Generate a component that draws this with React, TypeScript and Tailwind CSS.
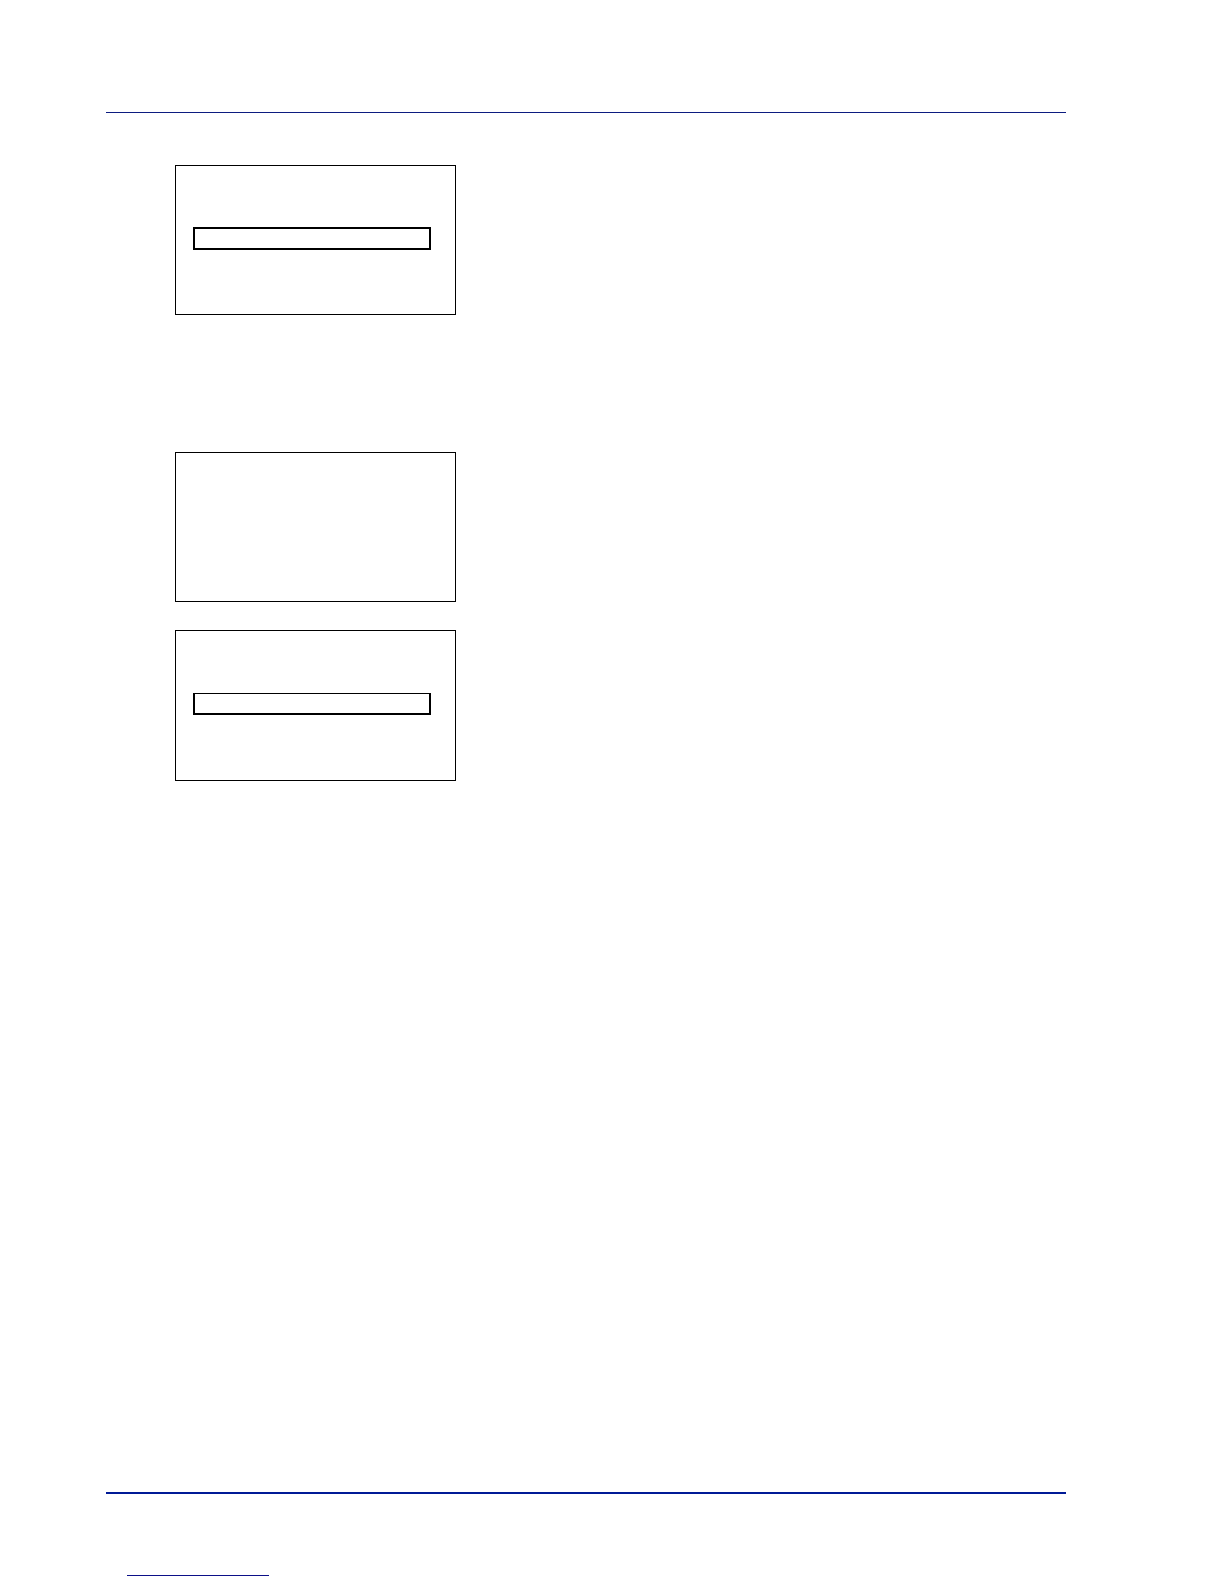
type Screen = {
  id: string;
  frame: string;
  selected?: string;
};

// Blank panel displays, top to bottom, with the outline of the selected row
const screens: Screen[] = [
  { id: 'first', frame: 'h-[150px] pt-[61px]', selected: 'h-[23px] border-2' },
  { id: 'second', frame: 'mt-[137px] h-[150px]' },
  { id: 'third', frame: 'mt-7 h-[151px] pt-[62px]', selected: 'h-[22px] border-2 border-t' },
];

function PanelScreen({ screen }: { screen: Screen }) {
  return (
    <section className={`w-[281px] border border-black pr-6 pl-[17px] ${screen.frame}`}>
      {screen.selected && <div className={`border-black ${screen.selected}`} />}
    </section>
  );
}

export default function App() {
  return (
    <div className="flex min-h-screen flex-col bg-white pt-28 pr-[158px] pb-2 pl-[106px] font-['Liberation_Sans',sans-serif]">
      <header>
        <hr className="border-t border-[#0c1c80]" />
      </header>
      <main className="pt-[52px] pl-[69px]">
        {screens.map((screen) => (
          <PanelScreen key={screen.id} screen={screen} />
        ))}
      </main>
      <footer className="mt-auto">
        <hr className="border-t-2 border-[#001a96]" />
        <hr className="mt-[81px] ml-[21px] w-[142px] border-t border-[#0c1088]" />
      </footer>
    </div>
  );
}
